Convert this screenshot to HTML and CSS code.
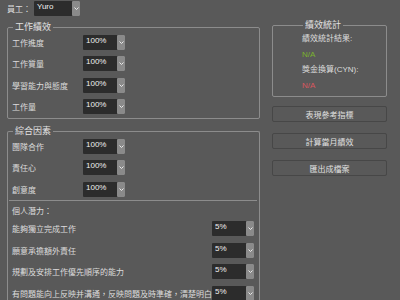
FILE: index.html
```html
<!DOCTYPE html>
<html lang="zh-Hant">

<head>
  <meta charset="UTF-8">
  <title>績效評估</title>
  <link rel="stylesheet" href="styles.css">
</head>

<body>

  <div class="app">

    <!-- Left column -->
    <div class="left">
      <div class="top-row">
        <span class="top-label">員工：</span>
        <div class="combo combo-name">
          <span class="combo-text">Yuro</span>
          <span class="combo-btn"><svg width="5" height="3" viewBox="0 0 5 3"><polyline points="0.5,0.5 2.5,2.5 4.5,0.5" fill="none" stroke="#e8e8e8" stroke-width="1"/></svg></span>
        </div>
      </div>

      <!-- 工作績效 -->
      <fieldset class="group group-work">
        <legend>工作績效</legend>
        <div class="row">
          <span class="row-label">工作進度</span>
          <div class="combo"><span class="combo-text">100%</span><span class="combo-btn"><svg width="5" height="3" viewBox="0 0 5 3"><polyline points="0.5,0.5 2.5,2.5 4.5,0.5" fill="none" stroke="#e8e8e8" stroke-width="1"/></svg></span></div>
        </div>
        <div class="row">
          <span class="row-label">工作質量</span>
          <div class="combo"><span class="combo-text">100%</span><span class="combo-btn"><svg width="5" height="3" viewBox="0 0 5 3"><polyline points="0.5,0.5 2.5,2.5 4.5,0.5" fill="none" stroke="#e8e8e8" stroke-width="1"/></svg></span></div>
        </div>
        <div class="row">
          <span class="row-label">學習能力與態度</span>
          <div class="combo"><span class="combo-text">100%</span><span class="combo-btn"><svg width="5" height="3" viewBox="0 0 5 3"><polyline points="0.5,0.5 2.5,2.5 4.5,0.5" fill="none" stroke="#e8e8e8" stroke-width="1"/></svg></span></div>
        </div>
        <div class="row">
          <span class="row-label">工作量</span>
          <div class="combo"><span class="combo-text">100%</span><span class="combo-btn"><svg width="5" height="3" viewBox="0 0 5 3"><polyline points="0.5,0.5 2.5,2.5 4.5,0.5" fill="none" stroke="#e8e8e8" stroke-width="1"/></svg></span></div>
        </div>
      </fieldset>

      <!-- 綜合因素 -->
      <fieldset class="group group-mix">
        <legend>綜合因素</legend>
        <div class="row">
          <span class="row-label">團隊合作</span>
          <div class="combo"><span class="combo-text">100%</span><span class="combo-btn"><svg width="5" height="3" viewBox="0 0 5 3"><polyline points="0.5,0.5 2.5,2.5 4.5,0.5" fill="none" stroke="#e8e8e8" stroke-width="1"/></svg></span></div>
        </div>
        <div class="row">
          <span class="row-label">責任心</span>
          <div class="combo"><span class="combo-text">100%</span><span class="combo-btn"><svg width="5" height="3" viewBox="0 0 5 3"><polyline points="0.5,0.5 2.5,2.5 4.5,0.5" fill="none" stroke="#e8e8e8" stroke-width="1"/></svg></span></div>
        </div>
        <div class="row">
          <span class="row-label">創意度</span>
          <div class="combo"><span class="combo-text">100%</span><span class="combo-btn"><svg width="5" height="3" viewBox="0 0 5 3"><polyline points="0.5,0.5 2.5,2.5 4.5,0.5" fill="none" stroke="#e8e8e8" stroke-width="1"/></svg></span></div>
        </div>

        <div class="separator"></div>

        <div class="sub-title">個人潛力：</div>
        <div class="row row-wide">
          <span class="row-label">能夠獨立完成工作</span>
          <div class="combo"><span class="combo-text">5%</span><span class="combo-btn"><svg width="5" height="3" viewBox="0 0 5 3"><polyline points="0.5,0.5 2.5,2.5 4.5,0.5" fill="none" stroke="#e8e8e8" stroke-width="1"/></svg></span></div>
        </div>
        <div class="row row-wide">
          <span class="row-label">願意承擔額外責任</span>
          <div class="combo"><span class="combo-text">5%</span><span class="combo-btn"><svg width="5" height="3" viewBox="0 0 5 3"><polyline points="0.5,0.5 2.5,2.5 4.5,0.5" fill="none" stroke="#e8e8e8" stroke-width="1"/></svg></span></div>
        </div>
        <div class="row row-wide">
          <span class="row-label">規劃及安排工作優先順序的能力</span>
          <div class="combo"><span class="combo-text">5%</span><span class="combo-btn"><svg width="5" height="3" viewBox="0 0 5 3"><polyline points="0.5,0.5 2.5,2.5 4.5,0.5" fill="none" stroke="#e8e8e8" stroke-width="1"/></svg></span></div>
        </div>
        <div class="row row-wide">
          <span class="row-label">有問題能向上反映并溝通，反映問題及時準確，清楚明白</span>
          <div class="combo"><span class="combo-text">5%</span><span class="combo-btn"><svg width="5" height="3" viewBox="0 0 5 3"><polyline points="0.5,0.5 2.5,2.5 4.5,0.5" fill="none" stroke="#e8e8e8" stroke-width="1"/></svg></span></div>
        </div>
      </fieldset>
    </div>

    <!-- Right column -->
    <div class="right">
      <fieldset class="group group-stats">
        <legend>績效統計</legend>
        <div class="stat-line">績效統計結果:</div>
        <div class="stat-line stat-good">N/A</div>
        <div class="stat-line">獎金換算(CYN):</div>
        <div class="stat-line stat-bad">N/A</div>
      </fieldset>

      <button class="action-btn">表現參考指標</button>
      <button class="action-btn">計算當月績效</button>
      <button class="action-btn">匯出成檔案</button>
    </div>

  </div>

</body>

</html>
```

FILE: styles.css
```css
html,
body {
  margin: 0;
  padding: 0;
  height: 100%;
  overflow: hidden;
}

body {
  background: #595959;
  color: #dcdcdc;
  font-family: "Liberation Sans", "Noto Sans CJK TC", sans-serif;
  font-size: 8px;
}

.app {
  display: flex;
  padding-left: 7px;
  gap: 12px;
}

/* Left column */
.left {
  width: 253px;
  display: flex;
  flex-direction: column;
}

.top-row {
  display: flex;
  align-items: center;
  height: 15px;
  margin-top: 1px;
}

.top-label {
  width: 27px;
}

.combo {
  display: flex;
  height: 15px;
  width: 42px;
  background: #2c2c2c;
  border-radius: 1px;
}

.combo-name {
  width: 46px;
}

.combo-text {
  flex: 1;
  padding-left: 3px;
  line-height: 12px;
  color: #f0f0f0;
}

.combo-btn {
  width: 8px;
  background: #8a8a8a;
  border-radius: 1px;
  display: flex;
  align-items: center;
  justify-content: center;
}

/* Group boxes */
.group {
  margin: 0;
  border: 1px solid #8c8c8c;
  border-radius: 2px;
  min-width: 0;
}

.group legend {
  padding: 0 2px;
  margin-left: 1px;
  font-size: 9px;
  line-height: 11px;
  color: #e2e2e2;
}

.group-work {
  margin-top: 6px;
  padding: 2px 0 4px 4px;
  display: flex;
  flex-direction: column;
  gap: 6.3px;
}

.group-mix {
  margin-top: 7px;
  padding: 2px 4px 30px 4px;
  border-bottom: none;
}

.row {
  display: flex;
  align-items: center;
  height: 15px;
}

.group-mix .row {
  margin-bottom: 6.5px;
}

.row-label {
  width: 71px;
}

.row-wide {
  justify-content: space-between;
  padding-right: 1px;
}

.row-wide .row-label {
  width: auto;
}

.separator {
  height: 1px;
  background: #8c8c8c;
  margin: -3px -2px 0 -3px;
}

.sub-title {
  line-height: 12px;
  margin-top: 5px;
  margin-bottom: 3px;
}

/* Right column */
.right {
  width: 115px;
  display: flex;
  flex-direction: column;
}

.group-stats {
  margin-top: 20px;
  padding: 0 0 3px 29px;
}

.stat-line {
  line-height: 15.5px;
}

.stat-good {
  color: #7bb32e;
}

.stat-bad {
  color: #d9575f;
}

.action-btn {
  margin-top: 9px;
  height: 16px;
  background: #595959;
  border: 1px solid #474747;
  border-radius: 2px;
  color: #e0e0e0;
  font-family: inherit;
  font-size: 8px;
  padding: 0;
}

.action-btn + .action-btn {
  margin-top: 11px;
}
```
